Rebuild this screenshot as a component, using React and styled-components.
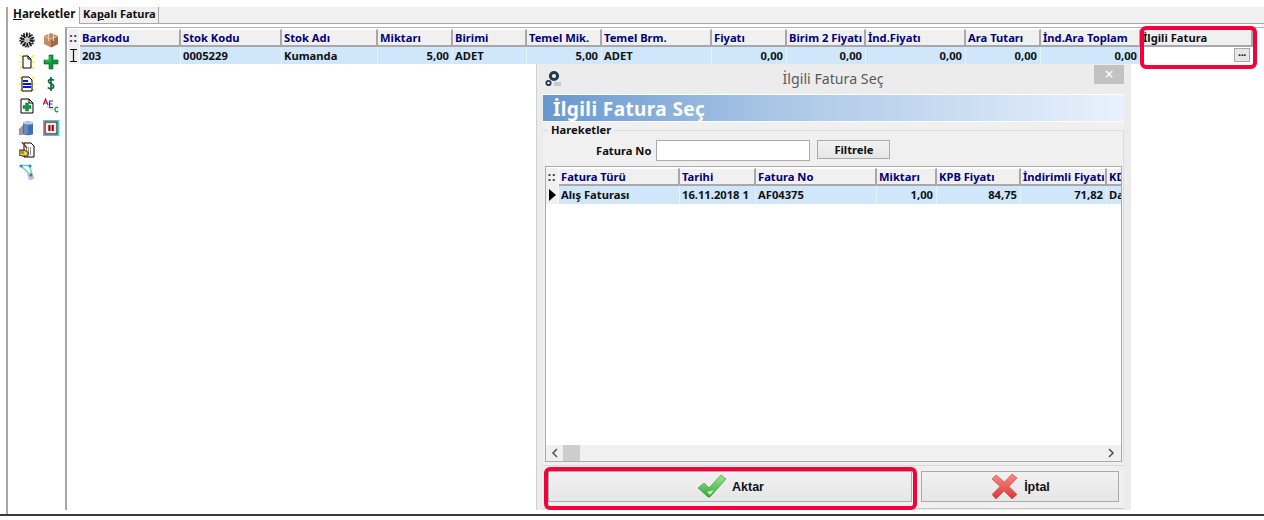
import React from "react";
import styled, { createGlobalStyle } from "styled-components";

const Global = createGlobalStyle`
  html, body { margin: 0; padding: 0; background: #fff; }
  body { font-family: "Noto Sans", "Liberation Sans", sans-serif; font-size: 11.2px; }
`;

const Page = styled.div`
  position: relative; width: 1264px; height: 520px; overflow: hidden; background: #fff;
  display: flex; flex-direction: column; box-sizing: border-box; padding-top: 7px;
`;
const Frame = styled.div`
  flex: none; height: 507px; margin-left: 6px; border-left: 2px solid #a6a6a6;
  display: flex; flex-direction: column;
`;
const BottomLine = styled.div`flex: none; height: 2px; background: #3a3a3a;`;
const TabBar = styled.div`
  flex: none; height: 16px; background: #f0f0f0; border-bottom: 1px solid #a9a9a9; display: flex;
`;
const Tab = styled.div`
  box-sizing: border-box; width: ${p => p.$w}px; height: ${p => p.$active ? 17 : 16}px;
  font-weight: 700; color: #111; line-height: 14px; padding-left: ${p => p.$active ? 5 : 3}px;
  background: ${p => p.$active ? "#fff" : "#f0f0f0"};
  border-right: 1px solid #a9a9a9; z-index: 1; white-space: nowrap; font-size: ${p => p.$active ? 11.6 : 11}px;
  u { text-underline-offset: 1px; }
`;
const Body = styled.div`flex: 1; display: flex; min-height: 0; margin-top: 3px;`;
const Toolbar = styled.div`
  flex: none; width: 57px; box-sizing: border-box; padding: 5px 0 0 11px;
  display: grid; grid-template-columns: 16px 16px; column-gap: 8px; grid-auto-rows: 22px; align-content: start;
  svg { display: block; width: 16px; height: 16px; }
`;
const Content = styled.div`
  flex: 1; display: flex; flex-direction: column; min-width: 0; margin-bottom: 4px;
  border-left: 2px solid #a6a6a6; border-top: 1px solid #b4b4b4; padding: 1px 0 0 1px;
`;
const Row = styled.div`display: flex; flex: none; height: ${p => p.$h}px;`;
const Corner = styled.div`
  flex: none; box-sizing: border-box; width: ${p => p.$w}px; background: #f0f0f0;
  color: #2a2a50; font-weight: 700; font-size: 12px; line-height: 14px; letter-spacing: 1px;
  border-right: 1px solid #fff; display: flex; align-items: center; justify-content: center;
`;
const Head = styled.div`
  flex: none; box-sizing: border-box; width: ${p => p.$w}px; background: #f0f0f0;
  border-right: 2px solid #a8a8a8; border-bottom: 2px solid #a8a8a8; border-top: 1px solid #fff;
  color: ${p => p.$dark ? "#111" : "#00007a"}; font-weight: 700; font-size: 11.2px; line-height: 15px;
  padding-left: 2px; white-space: nowrap; overflow: hidden;
`;
const Cell = styled.div`
  flex: none; box-sizing: border-box; width: ${p => p.$w}px; background: ${p => p.$blank ? "#fff" : "#cfe6fb"};
  border-right: 1px solid ${p => p.$blank ? "#fff" : "#e6f2fd"}; color: #111; font-weight: 700; font-size: 11.2px; line-height: 17px;
  padding: 0 ${p => p.$blank ? 2 : 3}px 0 2px; white-space: nowrap; overflow: hidden; text-align: ${p => p.$num ? "right" : "left"};
  display: flex; justify-content: ${p => p.$num ? "flex-end" : "flex-start"};
`;
const DotsButton = styled.div`
  margin-left: auto; margin-top: 1px; width: 16px; height: 14px; box-sizing: border-box; background: #e6e6e6;
  border: 1px solid #a8a8a8; color: #111; font-size: 11px; font-weight: 700; line-height: 11px; text-align: center; letter-spacing: -.5px;
`;
const Highlight = styled.div`
  position: absolute; box-sizing: border-box; border: 4px solid #f5003c; border-radius: 6px;
  left: ${p => p.$x}px; top: ${p => p.$y}px; width: ${p => p.$w}px; height: ${p => p.$h}px; z-index: 5;
`;
const Dialog = styled.div`
  position: absolute; left: 536px; top: 64px; width: 595px; height: 446px; box-sizing: border-box;
  background: #ececec; border-left: 1px solid #d0d0d0; display: flex; flex-direction: column; z-index: 3;
`;
const TitleBar = styled.div`
  flex: none; height: 30px; position: relative; display: flex; align-items: center; justify-content: center;
  font-size: 14.2px; color: #5a5a5a; padding: 0 2px 2px 0; box-sizing: border-box;
`;
const AppIcon = styled.svg`position: absolute; left: 8px; top: 6px; width: 17px; height: 18px;`;
const Close = styled.div`
  position: absolute; left: 557px; top: 1px; width: 30px; height: 19px; background: #c2c2c2; color: #fff;
  font-size: 16px; line-height: 18px; text-align: center;
`;
const Inner = styled.div`
  flex: none; width: 581px; margin-left: 6px; height: 414px; box-sizing: border-box; background: #f0f0f0;
  border-top: 1px solid #fff; display: flex; flex-direction: column;
`;
const Banner = styled.div`
  flex: none; height: 27px; box-sizing: border-box; padding-left: 10px;
  background: linear-gradient(90deg, #6898d0 0%, #a9c6e6 40%, #e9f2fe 100%);
  color: #fff; font-size: 19px; letter-spacing: .4px; font-weight: 700; line-height: 28px; white-space: nowrap;
  border-bottom: 1px solid #fff;
`;
const Group = styled.div`
  flex: none; position: relative; margin-top: 8px; border-top: 1px solid #dcdcdc; height: 332px;
  box-sizing: border-box; display: flex; flex-direction: column;
  border-right: 1px solid #dcdcdc;
`;
const GroupLabel = styled.div`
  position: absolute; left: 5px; top: -8px; background: #f0f0f0; padding: 0 3px 0 3px; font-weight: 700;
  font-size: 11.2px; line-height: 14px; color: #111;
`;
const FilterRow = styled.div`
  flex: none; height: 35px; box-sizing: border-box; padding: 9px 0 0 53px; display: flex; align-items: flex-start;
`;
const FilterLabel = styled.label`
  font-weight: 700; font-size: 11.2px; line-height: 21px; color: #111; margin-right: 5px;
`;
const Input = styled.div`
  width: 154px; height: 21px; box-sizing: border-box; background: #fff; border: 1px solid #ababab; margin-right: 7px;
`;
const FilterButton = styled.div`
  width: 73px; height: 19px; box-sizing: border-box; border: 1px solid #ababab; background: linear-gradient(#f2f2f2, #e6e6e6);
  font-weight: 700; font-size: 11.2px; line-height: 17px; text-align: center; color: #111;
`;
const InnerGrid = styled.div`
  flex: none; margin-left: 2px; width: 577px; height: 296px; box-sizing: border-box; background: #fff;
  border: 1px solid #ababab; padding-top: 1px; display: flex; flex-direction: column; overflow: hidden;
`;
const Spacer = styled.div`flex: 1;`;
const HScroll = styled.div`
  flex: none; height: 16px; background: #f0f0f0; display: flex; align-items: center; justify-content: space-between;
  padding: 0 6px 0 5px; position: relative;
  svg { width: 8px; height: 10px; display: block; }
`;
const Thumb = styled.div`position: absolute; left: 17px; top: 0; width: 17px; height: 16px; background: #cdcdcd;`;
const ActionPanel = styled.div`
  flex: none; margin-top: 3px; height: 44px; box-sizing: border-box; display: flex; gap: 9px; padding: 5px 0 0 5px;
  border-top: 1px solid #d8d8d8; border-bottom: 1px solid #c8c8c8;
`;
const ActionButton = styled.div`
  width: ${p => p.$w}px; height: 31px; box-sizing: border-box; border: 1px solid #ababab;
  background: linear-gradient(#f1f1f1, #e6e6e6); display: flex; align-items: center; justify-content: center; gap: ${p => p.$gap}px;
  font-family: "Liberation Sans", Arial, sans-serif; font-weight: 700; font-size: 12.5px; color: #101020;
  padding-left: 2px;
`;

const Gear = () => (
  <svg viewBox="0 0 16 16"><circle cx="8" cy="8" r="4.500" fill="none" stroke="#1a1a1a" strokeWidth="4" strokeDasharray="2 .8" /><circle cx="8" cy="8" r="6.800" fill="none" stroke="#333" strokeWidth="1.800" strokeDasharray="1.600 1.200" /><circle cx="8" cy="8" r="1.800" fill="#bbb" /></svg>
);
const Box = () => (
  <svg viewBox="0 0 16 16"><path d="M1 4 8 1l7 3v8l-7 3.500-7-3.500z" fill="#c08a62" /><path d="M8 7v8.500L15 12V4z" fill="#a06c48" /><path d="M1 4l7 3 7-3" fill="none" stroke="#e3c0a0" /><path d="M5.500 2v7M10.500 2v7" stroke="#e6cdb5" strokeWidth="1.200" /></svg>
);
const Spark = () => (
  <path d="M1 1 4 4M15 1 12 4M1 15 4 12M15 15 12 12M0 8H3M13 8H16M8 0V2" stroke="#f6f000" strokeWidth="1.200" />
);
const NewDoc = () => (
  <svg viewBox="0 0 16 16"><Spark /><path d="M4 2h5l3 3v9H4z" fill="#fff" stroke="#000" /><path d="M9 2v3h3" fill="none" stroke="#000" /></svg>
);
const Plus = () => (
  <svg viewBox="0 0 16 16"><path d="M6 1h4v5h5v4h-5v5H6v-5H1V6h5z" fill="#0a9a3a" stroke="#055a20" strokeWidth=".6" /><path d="M7 2v5H2" fill="none" stroke="#3fd070" /></svg>
);
const BlueDoc = () => (
  <svg viewBox="0 0 16 16"><Spark /><path d="M3 1h7l3 3v11H3z" fill="#fff" stroke="#000" /><path d="M4 5h5M4 8h8M4 11h8" stroke="#0a18d8" strokeWidth="2" /></svg>
);
const Dollar = () => (
  <svg viewBox="0 0 16 16"><path d="M11 4.500C10 3 6 2.800 5.500 5c-.5 3 5.500 2.500 5.200 5.500C10.300 13 6 13 4.800 11.500M8 1v14" fill="none" stroke="#0c6e3a" strokeWidth="1.700" /></svg>
);
const AddDoc = () => (
  <svg viewBox="0 0 16 16"><path d="M2 1h8l4 4v10H2z" fill="#fff" stroke="#000" /><path d="M10 1v4h4" fill="none" stroke="#000" /><path d="M6.500 5h3v2.500H12v3H9.500V13h-3v-2.500H4v-3h2.500z" fill="#0a9a3a" stroke="#055a20" strokeWidth=".4" /></svg>
);
const Abc = () => (
  <svg viewBox="0 0 16 16"><path d="M0 7 2.500 1 5 7M1 5h3" fill="none" stroke="#c01030" strokeWidth="1.200" /><path d="M6.500 3h3.500M6.500 6h3M6.500 9.500h3.500M6.500 3v6.500" fill="none" stroke="#2030a0" strokeWidth="1.200" /><path d="M15 10c-1-1.300-3-.8-3 1.500s2 2.800 3 1.500" fill="none" stroke="#10a050" strokeWidth="1.400" /><path d="M4 8l3 3h4" fill="none" stroke="#e0a0b0" strokeWidth=".8" /></svg>
);
const Barrel = () => (
  <svg viewBox="0 0 16 16"><path d="M4 3c0-2 10-2 10 0v11c0 1.500-10 1.500-10 0z" fill="#3f6fb0" /><ellipse cx="9" cy="3" rx="5" ry="1.500" fill="#b8cce4" /><path d="M0 15V9l4-4v10z" fill="#9a9a9a" /><path d="M6 5v9M8 5v9" stroke="#88a8d8" /></svg>
);
const PauseBox = () => (
  <svg viewBox="0 0 16 16"><rect x=".5" y=".5" width="15" height="15" fill="#fff" stroke="#18d8e8" /><rect x="2" y="2" width="12" height="12" fill="#f4ecec" stroke="#7a1414" strokeWidth="1.300" /><rect x="5.300" y="5" width="2.200" height="6" fill="#7a1414" /><rect x="8.600" y="5" width="2.200" height="6" fill="#7a1414" /></svg>
);
const HandDoc = () => (
  <svg viewBox="0 0 16 16"><path d="M5 1h7l3 3v11H5z" fill="#fff" stroke="#000" /><path d="M7 6h6M7 8h6M9 10h4M9 12h4" stroke="#222" strokeDasharray="1 1" /><path d="M0 8h5l4 2v4H3l-3-1z" fill="#f4d23c" stroke="#222" strokeWidth=".9" /><path d="M1 9h4M1 11h4" stroke="#222" strokeWidth=".7" /><path d="M3 0l5 6" stroke="#a02020" strokeWidth="1.400" /></svg>
);
const Network = () => (
  <svg viewBox="0 0 16 16"><path d="M1.500 1.500h9L14 13.500 1.500 1.500" fill="none" stroke="#66d0a8" strokeWidth="1.300" /><circle cx="2" cy="2" r="1.600" fill="#3a88d0" /><circle cx="11" cy="2" r="1.600" fill="#3a88d0" /><path d="M8 10l4-2 3 5-2 3h-3z" fill="#b8c4d4" /><circle cx="12" cy="11" r="1.500" fill="#4a70a8" /></svg>
);
const IBeam = () => (
  <svg width="7" height="13" viewBox="0 0 7 13"><path d="M0 .5h7M0 12.500h7M3.500 .5v12" fill="none" stroke="#111" strokeWidth="1.200" /></svg>
);

const Cog = () => (
  <AppIcon viewBox="0 0 17 18"><circle cx="9" cy="6" r="3.600" fill="none" stroke="#23394d" strokeWidth="3" /><circle cx="3.500" cy="13" r="2.200" fill="none" stroke="#23394d" strokeWidth="1.800" /><path d="M9 12h7v4H9z" fill="#c8c8c8" /></AppIcon>
);
const Check = () => (
  <svg width="28" height="23" viewBox="0 0 28 23">
    <defs><linearGradient id="ck" x1="0" y1="0" x2="0" y2="1"><stop offset="0" stopColor="#a0e890" /><stop offset="1" stopColor="#2fa838" /></linearGradient></defs>
    <path d="M0 13 6 8l5 5L23 0l5 4L12 22h-2z" fill="url(#ck)" stroke="#3f9a48" strokeWidth=".7" />
    <path d="M9 17l3 3 4-5z" fill="#d0f4c0" />
  </svg>
);
const Cross = () => (
  <svg width="25" height="25" viewBox="0 0 25 25">
    <defs><linearGradient id="cx" x1="0" y1="0" x2="0" y2="1"><stop offset="0" stopColor="#f88" /><stop offset="1" stopColor="#d83838" /></linearGradient></defs>
    <path d="M0 5 4 1l8.500 7L20 0l5 4-8 8.500 8 8-5 4.500-8-8-8 8-4-4.500 8-8z" fill="url(#cx)" stroke="#c84040" strokeWidth=".6" />
  </svg>
);

const mainCols = [
  ["Barkodu", 101, "203"], ["Stok Kodu", 101, "0005229"], ["Stok Adı", 96, "Kumanda"], ["Miktarı", 75, "5,00", 1],
  ["Birimi", 74, "ADET"], ["Temel Mik.", 75, "5,00", 1], ["Temel Brm.", 110, "ADET"], ["Fiyatı", 75, "0,00", 1],
  ["Birim 2 Fiyatı", 79, "0,00", 1], ["İnd.Fiyatı", 100, "0,00", 1], ["Ara Tutarı", 75, "0,00", 1], ["İnd.Ara Toplam", 100, "0,00", 1],
];
const subCols = [
  ["Fatura Türü", 121, "Alış Faturası"], ["Tarihi", 76, "16.11.2018 1"], ["Fatura No", 121, "AF04375"], ["Miktarı", 60, "1,00", 1],
  ["KPB Fiyatı", 84, "84,75", 1], ["İndirimli Fiyatı", 86, "71,82", 1], ["KD", 20, "Da"],
];
const icons = [Gear, Box, NewDoc, Plus, BlueDoc, Dollar, AddDoc, Abc, Barrel, PauseBox, HandDoc, null, Network, null];

export default function App() {
  return (
    <Page>
      <Global />
      <Frame>
        <TabBar>
          <Tab $w={72} $active><u>H</u>areketler</Tab>
          <Tab $w={79}>Ka<u>p</u>alı Fatura</Tab>
        </TabBar>
        <Body>
          <Toolbar>
            {icons.map((I, i) => (I ? <I key={i} /> : <span key={i} />))}
          </Toolbar>
          <Content>
            <Row $h={18}>
              <Corner $w={12}>::</Corner>
              {mainCols.map(c => <Head key={c[0]} $w={c[1]}>{c[0]}</Head>)}
              <Head $w={112} $dark>İlgili Fatura</Head>
            </Row>
            <Row $h={17}>
              <Corner $w={12}><IBeam /></Corner>
              {mainCols.map(c => <Cell key={c[0]} $w={c[1]} $num={c[3]}>{c[2]}</Cell>)}
              <Cell $w={112} $blank><DotsButton>···</DotsButton></Cell>
            </Row>
          </Content>
        </Body>
      </Frame>
      <BottomLine />
      <Dialog>
        <TitleBar>
          <Cog />
          <span>İlgili Fatura Seç</span>
          <Close>×</Close>
        </TitleBar>
        <Inner>
          <Banner>İlgili Fatura Seç</Banner>
          <Group>
            <GroupLabel>Hareketler</GroupLabel>
            <FilterRow>
              <FilterLabel>Fatura No</FilterLabel>
              <Input />
              <FilterButton>Filtrele</FilterButton>
            </FilterRow>
            <InnerGrid>
              <Row $h={18}>
                <Corner $w={13}>::</Corner>
                {subCols.map(c => <Head key={c[0]} $w={c[1]}>{c[0]}</Head>)}
              </Row>
              <Row $h={18}>
                <Corner $w={13}>
                  <svg width="7" height="12" viewBox="0 0 7 12"><path d="M0 0l7 6-7 6z" fill="#000" /></svg>
                </Corner>
                {subCols.map(c => <Cell key={c[0]} $w={c[1]} $num={c[3]}>{c[2]}</Cell>)}
              </Row>
              <Spacer />
              <HScroll>
                <svg viewBox="0 0 8 10"><path d="M6 1 2 5l4 4" fill="none" stroke="#555" strokeWidth="1.600" /></svg>
                <Thumb />
                <svg viewBox="0 0 8 10"><path d="M2 1l4 4-4 4" fill="none" stroke="#555" strokeWidth="1.600" /></svg>
              </HScroll>
            </InnerGrid>
          </Group>
          <ActionPanel>
            <ActionButton $w={364} $gap={6}><Check />Aktar</ActionButton>
            <ActionButton $w={198} $gap={7}><Cross />İptal</ActionButton>
          </ActionPanel>
        </Inner>
      </Dialog>
      <Highlight $x={1140} $y={26} $w={117} $h={43} />
      <Highlight $x={544} $y={467} $w={373} $h={43} />
    </Page>
  );
}
